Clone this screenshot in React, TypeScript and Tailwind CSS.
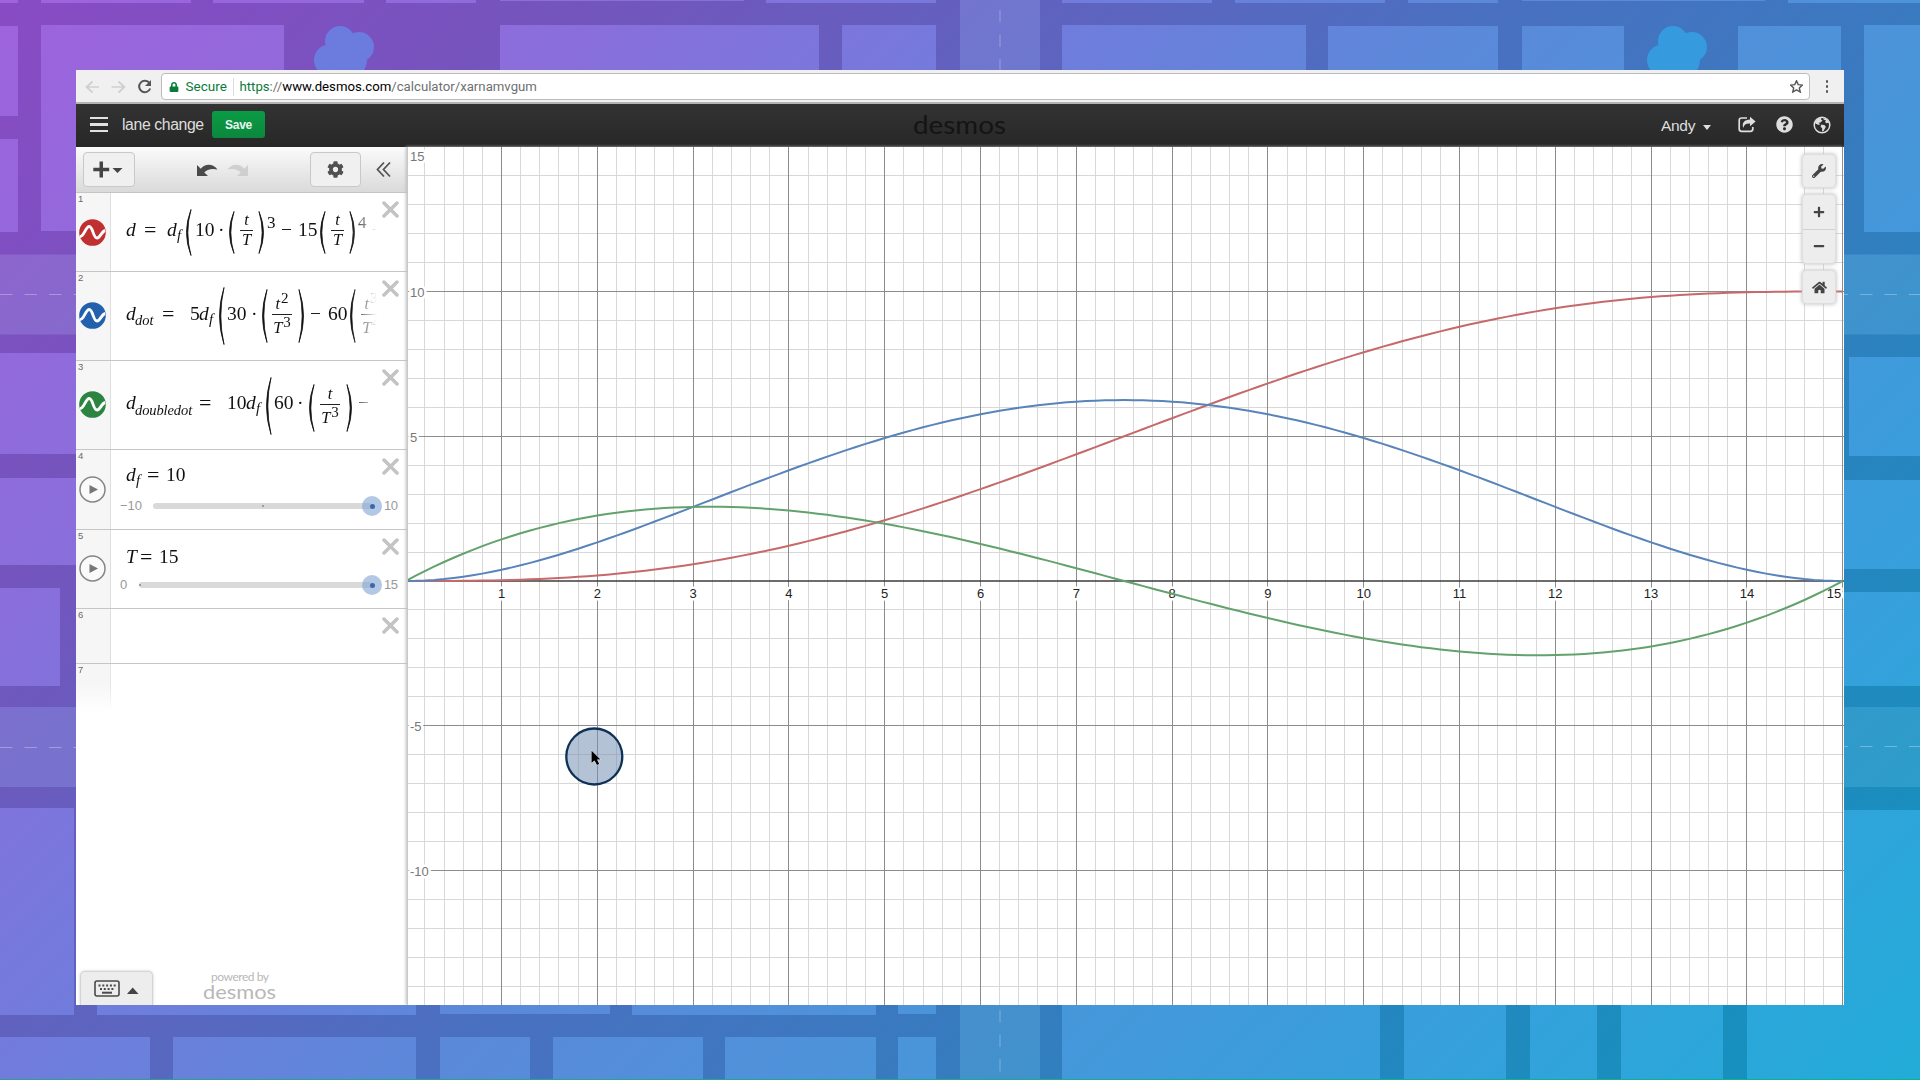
import type { ReactNode } from "react";
import { FaCog, FaPlus, FaMinus, FaWrench, FaHome, FaQuestionCircle, FaRegShareSquare, FaLock } from "react-icons/fa";

const SANS = "font-['Liberation_Sans',Arial,sans-serif]";

/* ---------- background map ---------- */

// x1, y1, x2, y2 of every city block
const BLOCKS: number[][] = [
  [0, 0, 18, 3], [41, 0, 191, 3], [213, 0, 364, 3], [386, 0, 476, 3], [500, 0, 744, 1], [766, 0, 936, 3],
  [1062, 0, 1212, 3], [1235, 0, 1385, 3], [1408, 0, 1498, 3], [1522, 0, 1765, 1], [1788, 0, 1920, 3],
  [0, 26, 18, 116], [0, 139, 18, 232], [41, 25, 284, 231], [500, 25, 819, 200], [842, 25, 936, 200],
  [1062, 25, 1306, 200], [1328, 26, 1498, 200], [1522, 26, 1624, 200], [1738, 26, 1841, 100], [1864, 25, 1920, 232],
  [0, 353, 100, 454], [0, 478, 100, 565], [0, 588, 60, 686], [0, 808, 74, 1015], [0, 1037, 150, 1080],
  [1849, 357, 1920, 456], [1800, 480, 1920, 569], [1800, 592, 1920, 686], [1747, 810, 1920, 1080],
  [97, 900, 416, 1015], [440, 900, 610, 1014], [632, 900, 876, 1015], [898, 900, 936, 1014],
  [173, 1037, 416, 1080], [440, 1037, 530, 1080], [553, 1037, 703, 1080], [725, 1037, 876, 1080], [898, 1037, 936, 1080],
  [1062, 900, 1380, 1080], [1404, 900, 1506, 1080], [1530, 900, 1597, 1080], [1621, 900, 1723, 1080],
];

function Tree({ x, fill }: { x: number; fill: string }) {
  return (
    <g fill={fill}>
      <ellipse cx={x + 26} cy={41} rx={15} ry={15} />
      <ellipse cx={x + 45} cy={47} rx={15} ry={15} />
      <ellipse cx={x + 14} cy={60} rx={14} ry={15} />
      <ellipse cx={x + 35} cy={60} rx={18} ry={18} />
    </g>
  );
}

function CityMap() {
  return (
    <svg className="absolute inset-0" width="1920" height="1080">
      <defs>
        <linearGradient id="base" gradientUnits="userSpaceOnUse" x1="0" y1="0" x2="1500" y2="1500">
          <stop offset="0" stopColor="#894bc4" />
          <stop offset="0.2" stopColor="#7355bd" />
          <stop offset="0.36" stopColor="#5f63c0" />
          <stop offset="0.5" stopColor="#4a70c1" />
          <stop offset="0.65" stopColor="#397abf" />
          <stop offset="0.77" stopColor="#2884bf" />
          <stop offset="1" stopColor="#1095be" />
        </linearGradient>
        <linearGradient id="block" gradientUnits="userSpaceOnUse" x1="0" y1="0" x2="1500" y2="1500">
          <stop offset="0" stopColor="#9e63dd" />
          <stop offset="0.2" stopColor="#8a6edb" />
          <stop offset="0.36" stopColor="#717cdc" />
          <stop offset="0.5" stopColor="#5b89da" />
          <stop offset="0.65" stopColor="#4b94da" />
          <stop offset="0.83" stopColor="#36a0dc" />
          <stop offset="1" stopColor="#22acd8" />
        </linearGradient>
        <linearGradient id="road" gradientUnits="userSpaceOnUse" x1="0" y1="0" x2="1500" y2="1500">
          <stop offset="0" stopColor="#9560cd" />
          <stop offset="0.34" stopColor="#7176ce" />
          <stop offset="0.67" stopColor="#4590cd" />
          <stop offset="1" stopColor="#22a2c9" />
        </linearGradient>
        <linearGradient id="edge" x1="0" x2="1" y1="0" y2="0">
          <stop offset="0" stopColor="#2f9c9a" />
          <stop offset="1" stopColor="#0bb58c" />
        </linearGradient>
      </defs>
      <rect width="1920" height="1080" fill="url(#base)" />
      {BLOCKS.map(([a, b, c, d]) => (
        <path key={`${a}-${b}`} d={`M${a} ${b}H${c}V${d}H${a}Z`} fill="url(#block)" />
      ))}
      <path d="M0 254.500H1920V334.500H0ZM0 707H1920V787H0ZM960 0H1040V1080H960Z" fill="url(#road)" />
      <g stroke="#ffffff" strokeOpacity="0.3" strokeDasharray="12.500 12">
        <path d="M0 294.500H100M0 747.500H100" />
        <path d="M1835.500 294.500H1920M1835.500 746.500H1920" />
        <path d="M1000 10V80M1000 1010V1080" />
      </g>
      <Tree x={314} fill="#6b7bde" />
      <Tree x={1647} fill="#359bde" />
      <rect y="1079" width="1920" height="1" fill="url(#edge)" />
    </svg>
  );
}

/* ---------- browser bar and header ---------- */

function BrowserBar() {
  return (
    <div className="flex h-[34px] shrink-0 items-center border-b-2 border-[#b4b4b4] bg-[#f0f0f0] pt-px font-[Roboto,sans-serif] text-[14px]">
      <svg className="ml-[9px] shrink-0" width="70" height="20" viewBox="0 0 70 20" fill="none" strokeWidth="1.700">
        <path d="M14 10H1.500M7.500 4.500L1.500 10L7.500 15.500" stroke="#cfcfcf" />
        <path d="M26.500 10H39.500M33.500 4.500L39.500 10L33.500 15.500" stroke="#cfcfcf" />
        <path d="M64.500 6.200A5.700 5.700 0 1 0 65.200 11.500" stroke="#555" strokeWidth="2" />
        <path d="M66 3V9H60Z" fill="#555" />
      </svg>
      <div className="ml-[6px] flex h-[27px] w-[1649px] shrink-0 items-center rounded-[4px] border border-[#bcbcbc] bg-white">
        <FaLock className="ml-[7px] text-[#0b7a3d]" size={10} />
        <span className="ml-[6.500px] w-[47.500px] text-[13.500px] text-[#0b7a3d]">Secure</span>
        <span className="h-[18px] w-px bg-[#dcdcdc]" />
        <span className="ml-[5.500px] text-[13.200px] text-[#6f6f6f]">
          <span className="text-[#0b7a3d]">https</span>://<span className="text-black">www.desmos.com</span>/calculator/xarnamvgum
        </span>
        <svg className="mr-[6px] ml-auto" width="13" height="13" viewBox="0 0 24 24" fill="none" stroke="#555" strokeWidth="2.600">
          <path d="M12 1.500L15.200 8.600L23 9.400L17.200 14.600L18.900 22.200L12 18.200L5.100 22.200L6.800 14.600L1 9.400L8.800 8.600Z" />
        </svg>
      </div>
      <div className="ml-[15.500px] flex flex-col gap-[2.500px]">
        <i className="size-[2.500px] rounded-full bg-[#555]" />
        <i className="size-[2.500px] rounded-full bg-[#555]" />
        <i className="size-[2.500px] rounded-full bg-[#555]" />
      </div>
    </div>
  );
}

function Header() {
  return (
    <div className={`flex h-[43px] shrink-0 items-center bg-linear-to-b from-[#333] to-[#272727] pb-[2px] ${SANS}`}>
      <div className="ml-[14px] flex w-[18px] flex-col gap-[4px]">
        <i className="h-[2.500px] bg-[#e2e2e2]" />
        <i className="h-[2.500px] bg-[#e2e2e2]" />
        <i className="h-[2.500px] bg-[#e2e2e2]" />
      </div>
      <span className="ml-[14px] w-[90px] text-[15.800px] tracking-[-0.4px] whitespace-nowrap text-[#dedede]">lane change</span>
      <span className="flex h-[27px] w-[53px] items-center justify-center rounded-[3px] bg-linear-to-b from-[#0a9c46] to-[#0b873d] text-[12px] font-bold tracking-[-0.3px] text-[#e9f6ee]">
        Save
      </span>
      <svg className="ml-[646px]" width="98" height="34">
        <text x="2" y="26" fontSize="24.500" textLength="93" lengthAdjust="spacingAndGlyphs" fill="#141414" className="font-[Lato,sans-serif]">
          desmos
        </text>
      </svg>
      <span className="ml-[652px] mt-[2px] w-[42px] text-[15.500px] tracking-[-0.3px] text-[#dedede]">Andy</span>
      <i className="mt-[5px] border-x-[4.500px] border-t-[5px] border-x-transparent border-t-[#dedede]" />
      <svg className="ml-[27px]" width="18" height="17" viewBox="0 0 18 17">
        <path d="M9 2H3.500Q1.200 2 1.200 4.300V13Q1.200 15.300 3.500 15.300H12.500Q14.800 15.300 14.800 13V11" fill="none" stroke="#dedede" strokeWidth="1.700" />
        <path d="M12 0.800L17.600 5.500L12 10.200V7.500C8 7.300 6 8.500 5.300 12C3.500 7 6.500 3.500 12 3.500Z" fill="#dedede" />
      </svg>
      <FaQuestionCircle className="ml-[19.500px] text-[#dedede]" size={17} />
      <svg className="ml-[20px]" width="18" height="18" viewBox="0 0 18 18">
        <circle cx="9" cy="9" r="7.800" fill="none" stroke="#dedede" strokeWidth="1.500" />
        <path d="M2 6L4.500 2.800L8.500 1.500L8 3.500L9.500 4.500L7.500 6.500L5.500 6.800L7.300 8.500L5 8.800L2.500 7.500ZM8.500 8.500L11.800 9.300L12.800 11L10.500 15L9 15.500L9.200 12.500L7.500 10.500ZM10.500 2L14 3.500L16 6.500L13.500 7.300L12 6L13 4.500L10.500 3.500Z" fill="#dedede" />
      </svg>
    </div>
  );
}

/* ---------- formula pieces ---------- */

function Tok({ c, children }: { c: string; children: ReactNode }) {
  return <span className={`block shrink-0 leading-none whitespace-nowrap ${c}`}>{children}</span>;
}

function Paren({ c, h, close }: { c: string; h: number; close?: boolean }) {
  const w = 8;
  const d = close
    ? `M1 0.500Q${w * 1.25} ${h / 2} 1 ${h - 0.5}Q${w * 0.92} ${h / 2} 1 0.500Z`
    : `M${w - 1} 0.500Q${-w * 0.25} ${h / 2} ${w - 1} ${h - 0.5}Q${w * 0.08} ${h / 2} ${w - 1} 0.500Z`;
  return (
    <div className={`shrink-0 ${c}`}>
      <svg width={w} height={h}>
        <path d={d} fill="#111" stroke="#111" strokeWidth="0.800" />
      </svg>
    </div>
  );
}

function Frac({ c, top, bottom, sup, bsup }: { c: string; top: string; bottom: string; sup?: string; bsup?: string }) {
  return (
    <div className={`shrink-0 ${c}`}>
      <div className="flex flex-col items-center text-[16.500px] leading-none italic">
        <span className="flex h-[17px]">
          {top}
          {sup && <span className="-mt-[5px] ml-px text-[15px] not-italic">{sup}</span>}
        </span>
        <i className="mt-px h-px w-full bg-[#222]" />
        <span className={bsup ? "mt-[5px] flex h-[16px]" : "mt-[1px] flex h-[16px]"}>
          {bottom}
          {bsup && <span className="-mt-[5px] ml-px text-[15px] not-italic">{bsup}</span>}
        </span>
      </div>
    </div>
  );
}

function Formula({ children }: { children: ReactNode }) {
  return (
    <div className="ml-[15px] flex h-full w-[251px] items-start overflow-hidden mask-r-from-90% mask-r-to-100% font-['Liberation_Serif',serif] text-[19.500px] text-[#111]">
      {children}
    </div>
  );
}

function Close() {
  return (
    <svg className="mt-[7.500px] mr-[8px] ml-auto shrink-0" width="17" height="17" stroke="#c3c3c3" strokeWidth="3.500" strokeLinecap="round">
      <path d="M2 2L15 15M15 2L2 15" />
    </svg>
  );
}

function Curve({ c }: { c: string }) {
  return (
    <svg width="27" height="27" viewBox="0 0 27 27">
      <circle cx="13.500" cy="13.500" r="13.300" fill={c} />
      <path d="M0.800 17.500C5 18 6.500 7.500 10.200 7.500C14 7.500 14 19 18 19C21.500 19 22.500 12 26.200 11.500" fill="none" stroke="#fff" strokeWidth="2.900" />
    </svg>
  );
}

function Play() {
  return (
    <svg width="27" height="27" viewBox="0 0 27 27">
      <circle cx="13.500" cy="13.500" r="12.500" fill="#fafafa" stroke="#858585" strokeWidth="1.500" />
      <path d="M10.500 9L19 13.500L10.500 18Z" fill="#777" />
    </svg>
  );
}

function RowNumber({ n }: { n: number }) {
  return <div className="h-[16px] pt-px pl-[2px] text-[9.500px] leading-none text-[#6a6a6a]">{n}</div>;
}

function Row({ n, h, icon, children }: { n: number; h: string; icon?: ReactNode; children?: ReactNode }) {
  return (
    <div className={`flex shrink-0 border-b border-[#c6c6c6] ${h}`}>
      <div className="w-[35px] shrink-0 border-r border-[#dedede] bg-[#f6f6f6]">
        <RowNumber n={n} />
        {icon}
      </div>
      {children}
      <Close />
    </div>
  );
}

function Slider({ min, max, labelW, mid }: { min: string; max: string; labelW: string; mid?: boolean }) {
  return (
    <div className="ml-[9px] flex h-[20px] items-center text-[13px] text-[#999]">
      <span className={labelW}>{min}</span>
      <div className="flex h-[5.500px] flex-1 items-center rounded-full bg-[#d9d9d9]">
        <i className={mid ? "ml-[109px] size-[2px] rounded-full bg-[#888]" : "size-[2px] rounded-full bg-[#888]"} />
      </div>
      <span className="-ml-[10px] flex size-[20px] items-center justify-center rounded-full bg-[#7ea4d4]/60">
        <i className="size-[5px] rounded-full bg-[#3b68ac]" />
      </span>
      <span className="ml-[2px] w-[16px] tracking-[-0.5px]">{max}</span>
    </div>
  );
}

function SliderRow({ n, h, iconTop, formula, slider }: { n: number; h: string; iconTop: string; formula: ReactNode; slider: ReactNode }) {
  return (
    <div className={`flex shrink-0 border-b border-[#c6c6c6] ${h}`}>
      <div className="w-[35px] shrink-0 border-r border-[#dedede] bg-[#f6f6f6]">
        <RowNumber n={n} />
        <div className={iconTop}>
          <Play />
        </div>
      </div>
      <div className="flex flex-1 flex-col">
        <div className={n === 4 ? "flex h-[46px]" : "flex h-[45px]"}>
          {formula}
          <Close />
        </div>
        <div className="w-[289px]">{slider}</div>
      </div>
    </div>
  );
}

function Toolbar() {
  return (
    <div className="flex h-[46px] shrink-0 items-center border-b border-[#c4c4c4] bg-linear-to-b from-[#fbfbfb] to-[#dadada]">
      <div className="ml-[7px] flex h-[35px] w-[52px] items-center rounded-[4px] border border-[#c8c8c8] bg-[#f0f0f0]">
        <svg className="ml-[9px]" width="31" height="17" fill="#444">
          <path d="M6.500 0.500H10V6.700H16.200V10.200H10V16.500H6.500V10.200H0.300V6.700H6.500ZM19.500 7H29.500L24.500 12Z" />
        </svg>
      </div>
      <svg className="ml-[60px]" width="54" height="20">
        <path d="M2 5V16H13L9.300 12.500C12 9.500 16.500 8 22.500 9.500C18.500 3.500 10 3 5.800 8.800Z" fill="#4a4a4a" />
        <path d="M53 5V16H42L45.700 12.500C43 9.500 38.500 8 32.500 9.500C36.500 3.500 45 3 49.200 8.800Z" fill="#cfcfcf" />
      </svg>
      <div className="ml-[61px] flex h-[35px] w-[51px] items-center justify-center rounded-[4px] border border-[#c8c8c8] bg-[#f0f0f0]">
        <FaCog size={17} color="#505050" />
      </div>
      <svg className="ml-[15px]" width="15" height="17" fill="none" stroke="#555" strokeWidth="1.800">
        <path d="M8 1.500L1.500 8.500L8 15.500M14 1.500L7.500 8.500L14 15.500" />
      </svg>
    </div>
  );
}

function Sidebar() {
  return (
    <div className={`flex w-[331px] shrink-0 flex-col bg-white ${SANS}`}>
      <Toolbar />
      <Row n={1} h="h-[79px]" icon={<div className="mt-[9.500px] ml-[3px]"><Curve c="#c03030" /></div>}>
        <Formula>
          <Tok c="mt-[27px] w-[18px] italic">d</Tok>
          <Tok c="mt-[27px] w-[23px] text-[22px] -translate-y-[1.500px]">=</Tok>
          <Tok c="mt-[27px] w-[9px] italic">d</Tok>
          <Tok c="mt-[35px] w-[8px] pl-[1px] text-[15px] italic">f</Tok>
          <Paren c="mt-[16px] w-[11px]" h={47} />
          <Tok c="mt-[27px] w-[23px]">10</Tok>
          <Tok c="mt-[27px] w-[9px]">·</Tok>
          <Paren c="mt-[18px] w-[13px]" h={43} />
          <Frac c="mt-[19px] w-[13px]" top="t" bottom="T" />
          <Paren c="mt-[18px] ml-[5px] w-[9px]" h={43} close />
          <Tok c="mt-[21px] w-[14px] text-[17px]">3</Tok>
          <Tok c="mt-[27px] w-[17px]">−</Tok>
          <Tok c="mt-[27px] w-[20px]">15</Tok>
          <Paren c="mt-[18px] w-[13px]" h={43} />
          <Frac c="mt-[19px] w-[13px]" top="t" bottom="T" />
          <Paren c="mt-[18px] ml-[5px] w-[9px]" h={43} close />
          <Tok c="mt-[21px] w-[14px] text-[17px]">4</Tok>
          <Tok c="mt-[27px] w-[16px]">+</Tok>
        </Formula>
      </Row>
      <Row n={2} h="h-[89px]" icon={<div className="mt-[14px] ml-[3px]"><Curve c="#2360ad" /></div>}>
        <Formula>
          <Tok c="mt-[32px] w-[9px] italic">d</Tok>
          <Tok c="mt-[41px] w-[27px] text-[14.500px] italic">dot</Tok>
          <Tok c="mt-[32px] w-[28px] text-[22px] -translate-y-[1.500px]">=</Tok>
          <Tok c="mt-[32px] w-[9px]">5</Tok>
          <Tok c="mt-[32px] w-[9px] italic">d</Tok>
          <Tok c="mt-[40px] w-[9px] pl-[1px] text-[15px] italic">f</Tok>
          <Paren c="mt-[15px] w-[10px]" h={58} />
          <Tok c="mt-[32px] w-[24px]">30</Tok>
          <Tok c="mt-[32px] w-[9px]">·</Tok>
          <Paren c="mt-[17px] w-[12px]" h={54} />
          <Frac c="mt-[24px] w-[20px]" top="t" sup="2" bottom="T" bsup="3" />
          <Paren c="mt-[17px] ml-[6px] w-[12px]" h={54} close />
          <Tok c="mt-[32px] w-[18px]">−</Tok>
          <Tok c="mt-[32px] w-[20px]">60</Tok>
          <Paren c="mt-[17px] w-[13px]" h={54} />
          <Frac c="mt-[24px] w-[20px]" top="t" sup="3" bottom="T" bsup="4" />
        </Formula>
      </Row>
      <Row n={3} h="h-[89px]" icon={<div className="mt-[14px] ml-[3px]"><Curve c="#2b8540" /></div>}>
        <Formula>
          <Tok c="mt-[32px] w-[9px] italic">d</Tok>
          <Tok c="mt-[42px] w-[64px] text-[14.500px] tracking-[-0.1px] italic">doubledot</Tok>
          <Tok c="mt-[32px] w-[28px] text-[22px] -translate-y-[1.500px]">=</Tok>
          <Tok c="mt-[32px] w-[19px]">10</Tok>
          <Tok c="mt-[32px] w-[9px] italic">d</Tok>
          <Tok c="mt-[40px] w-[9px] pl-[1px] text-[15px] italic">f</Tok>
          <Paren c="mt-[16px] w-[10px]" h={58} />
          <Tok c="mt-[32px] w-[23px]">60</Tok>
          <Tok c="mt-[32px] w-[10px]">·</Tok>
          <Paren c="mt-[23px] w-[13px]" h={48} />
          <Frac c="mt-[25px] w-[20px]" top="t" bottom="T" bsup="3" />
          <Paren c="mt-[23px] ml-[6px] w-[12px]" h={48} close />
          <Tok c="mt-[32px] w-[18px]">−</Tok>
        </Formula>
      </Row>
      <SliderRow
        n={4}
        h="h-[80px]"
        iconTop="mt-[10px] ml-[3px]"
        formula={
          <Formula>
            <Tok c="mt-[15px] w-[9px] italic">d</Tok>
            <Tok c="mt-[23px] w-[12px] pl-[1px] text-[15px] italic">f</Tok>
            <Tok c="mt-[13.500px] w-[19px] text-[22px]">=</Tok>
            <Tok c="mt-[15px] w-[20px]">10</Tok>
          </Formula>
        }
        slider={<Slider min="−10" max="10" labelW="w-[33px]" mid />}
      />
      <SliderRow
        n={5}
        h="h-[79px]"
        iconTop="mt-[9px] ml-[3px]"
        formula={
          <Formula>
            <Tok c="mt-[17px] w-[14px] italic">T</Tok>
            <Tok c="mt-[15.500px] w-[19px] text-[22px]">=</Tok>
            <Tok c="mt-[17px] w-[20px]">15</Tok>
          </Formula>
        }
        slider={<Slider min="0" max="15" labelW="w-[19px]" />}
      />
      <Row n={6} h="h-[55px]" />
      <div className="h-[48px] w-[35px] border-r border-[#e4e4e4] bg-[#f6f6f6] mask-b-from-40% mask-b-to-100%">
        <div className="pt-px pl-[2px] text-[9.500px] leading-none text-[#6a6a6a]">7</div>
      </div>
      <div className="mt-auto flex items-end">
        <div className="ml-[4px] flex h-[34px] w-[73px] items-center rounded-t-[5px] border border-b-0 border-[#d4d4d4] bg-[#ededed] shadow-[0_0_3px_#ccc]">
          <svg className="ml-[13px]" width="46" height="18">
            <rect x="1" y="1" width="24" height="15" rx="2" fill="none" stroke="#4a4a4a" strokeWidth="1.600" />
            <path d="M4.500 5.500H22" stroke="#4a4a4a" strokeWidth="2" strokeDasharray="2 1.800" />
            <path d="M6 9H20.500" stroke="#4a4a4a" strokeWidth="2" strokeDasharray="2 1.800" />
            <path d="M8 12.700H18" stroke="#4a4a4a" strokeWidth="2" />
            <path d="M33 14H44.500L38.700 7.500Z" fill="#444" />
          </svg>
        </div>
        <svg className="ml-[49px]" width="78" height="36" fill="#b8b8b8">
          <text x="9" y="12" fontSize="12" textLength="58" className="font-[Lato,sans-serif]">powered by</text>
          <text x="1" y="29.500" fontSize="20" textLength="73" lengthAdjust="spacingAndGlyphs" className="font-[Lato,sans-serif]">desmos</text>
        </svg>
      </div>
    </div>
  );
}

/* ---------- graph ---------- */

const X0 = -2.3; // x pixel of the origin inside the graph
const UX = 95.8;
const Y0 = 434;
const UY = 28.95;
const W = 1436;
const H = 858;

const snap = (v: number) => Math.floor(v) + 0.5;

function plot(f: (s: number) => number) {
  let d = "";
  for (let i = 0; i <= 150; i++) {
    const s = i / 150;
    d += `${i ? "L" : "M"}${(X0 + s * 15 * UX).toFixed(2)} ${(Y0 - f(s) * UY).toFixed(2)}`;
  }
  return d;
}

const range = (a: number, b: number) => Array.from({ length: b - a + 1 }, (_, i) => a + i);

function Graph() {
  return (
    <svg width={W} height={H} className={`block ${SANS}`} fontSize="13">
      <g stroke="#d8d8d8" strokeWidth="1">
        {range(1, 74).filter((i) => i % 5).map((i) => <path key={i} d={`M${snap(X0 + (i * UX) / 5)} 0V${H}`} />)}
        {range(-14, 14).filter((i) => i % 5).map((i) => <path key={i} d={`M0 ${snap(Y0 - i * UY)}H${W}`} />)}
      </g>
      <g stroke="#8c8c8c" strokeWidth="1">
        {range(1, 15).map((i) => <path key={i} d={`M${snap(X0 + i * UX)} 0V${H}`} />)}
        {[-10, -5, 5, 10].map((i) => <path key={i} d={`M0 ${snap(Y0 - i * UY)}H${W}`} />)}
      </g>
      <path d={`M0 ${Y0}H${W}`} stroke="#3c3c3c" strokeWidth="1.500" />
      <g stroke="#fff" strokeWidth="5" paintOrder="stroke" strokeLinejoin="round">
        <g fill="#222" textAnchor="middle">
          {range(1, 14).map((i) => <text key={i} x={X0 + i * UX} y={451}>{i}</text>)}
          <text x={1426} y={451}>15</text>
        </g>
        <g fill="#777">
          <text x="2" y="14">15</text>
          <text x="2" y="150">10</text>
          <text x="2" y="295">5</text>
          <text x="2" y="584">-5</text>
          <text x="2" y="729">-10</text>
        </g>
      </g>
      <g fill="none" strokeWidth="2">
        <path d={plot((s) => 10 * (10 * s ** 3 - 15 * s ** 4 + 6 * s ** 5))} stroke="#c6696b" />
        <path d={plot((s) => (50 * (30 * s ** 2 - 60 * s ** 3 + 30 * s ** 4)) / 15)} stroke="#5884ba" />
        <path d={plot((s) => (100 * (60 * s - 180 * s ** 2 + 120 * s ** 3)) / 225)} stroke="#63a26d" />
      </g>
      <circle cx="186.300" cy="609.500" r="28" fill="#7690b3" fillOpacity="0.550" stroke="#0d3157" strokeWidth="2.300" />
      <path d="M183.500 603.500V616L186.500 613.500L189 618L191.300 617L189 612.500H192.500Z" fill="#000" stroke="#fff" strokeWidth="1" paintOrder="stroke" />
    </svg>
  );
}

function SideButton({ children }: { children: ReactNode }) {
  return <div className="flex h-[34px] items-center justify-center rounded-[4px] border border-[#dedede] bg-[#ededed] shadow-[0_0_4px_#bbb]">{children}</div>;
}

export default function App() {
  return (
    <div className="relative h-[1080px] w-[1920px] overflow-hidden">
      <CityMap />
      <div className="absolute top-[70px] left-[76px] flex h-[935px] w-[1768px] flex-col overflow-hidden bg-white">
        <BrowserBar />
        <Header />
        <div className="flex min-h-0 flex-1">
          <Sidebar />
          <div className="relative border-l border-[#c8c8c8] shadow-[-1px_0_3px_#bbb]">
            <Graph />
            <div className="absolute top-[7px] right-[8px] flex w-[34px] flex-col gap-[6px] text-[#444]">
              <SideButton><FaWrench size={14} /></SideButton>
              <div className="flex h-[70px] flex-col rounded-[4px] border border-[#dedede] bg-[#ededed] shadow-[0_0_4px_#bbb]">
                <div className="flex flex-1 items-center justify-center border-b border-[#d2d2d2]"><FaPlus size={12} /></div>
                <div className="flex flex-1 items-center justify-center"><FaMinus size={12} /></div>
              </div>
              <SideButton><FaHome size={15} /></SideButton>
            </div>
          </div>
        </div>
      </div>
    </div>
  );
}
